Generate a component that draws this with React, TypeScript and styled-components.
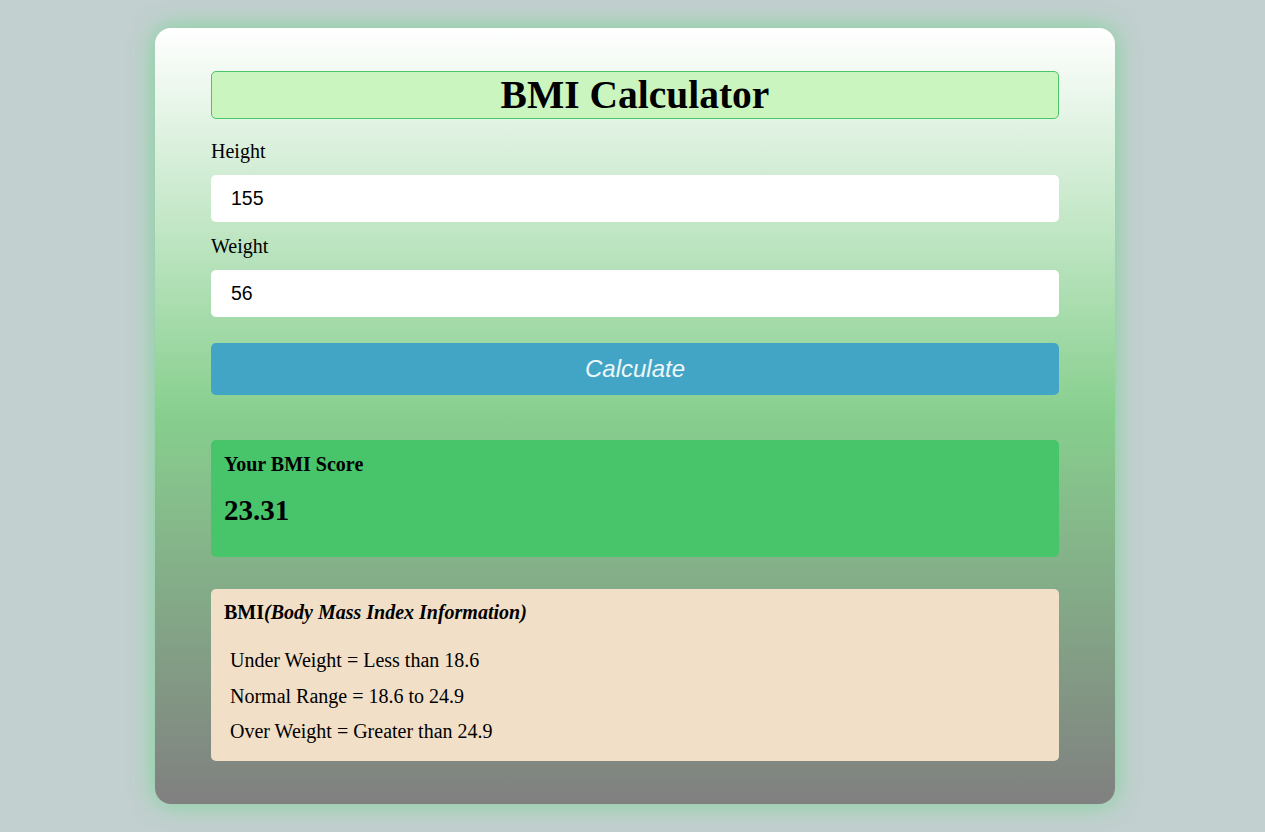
import React from "react";
import styled, { createGlobalStyle } from "styled-components";

const Global = createGlobalStyle`
  html, body { margin: 0; padding: 0; }
  body {
    background: #c2d0cf;
    font-family: "Liberation Serif", "Times New Roman", serif;
    color: #000;
  }
`;

const Page = styled.div`
  display: flex;
  justify-content: center;
  padding: 28px 0 28px 5px;
`;

const Card = styled.div`
  width: 960px;
  box-sizing: border-box;
  padding: 43px 56px 43px 56px;
  border-radius: 16px;
  background: linear-gradient(to bottom, #ffffff 0%, #87cf8e 50%, #808080 100%);
  box-shadow: 0 0 24px rgba(110, 210, 140, 0.85);
  display: flex;
  flex-direction: column;
`;

const Title = styled.h1`
  margin: 0;
  height: 48px;
  box-sizing: border-box;
  border: 1px solid #4cc46a;
  border-radius: 5px;
  background: #cbf5be;
  font-size: 39.5px;
  line-height: 46px;
  font-weight: bold;
  text-align: center;
`;

const Label = styled.label<{ $top: number }>`
  display: block;
  margin-top: ${(p) => p.$top}px;
  font-size: 20px;
  line-height: 23px;
`;

const Input = styled.input`
  display: block;
  margin-top: 12px;
  height: 47px;
  box-sizing: border-box;
  border: none;
  border-radius: 5px;
  background: #fff;
  padding: 0 20px;
  font-family: "Liberation Sans", Arial, sans-serif;
  font-size: 19.5px;
  color: #000;
  outline: none;
`;

const Button = styled.button`
  margin-top: 26px;
  height: 52px;
  border: none;
  border-radius: 5px;
  background: #42a5c5;
  color: #eef7fa;
  font-family: "Liberation Sans", Arial, sans-serif;
  font-style: italic;
  font-size: 24px;
  cursor: pointer;
`;

const ScoreBox = styled.div`
  margin-top: 45px;
  height: 117px;
  box-sizing: border-box;
  background: #48c46a;
  border-radius: 5px;
  padding: 13px 13px;
`;

const ScoreTitle = styled.h3`
  margin: 0;
  font-size: 20px;
  line-height: 23px;
  font-weight: bold;
`;

const ScoreValue = styled.div`
  margin-top: 18px;
  font-size: 29px;
  line-height: 33px;
  font-weight: bold;
`;

const InfoBox = styled.div`
  margin-top: 32px;
  height: 172px;
  box-sizing: border-box;
  background: #f2dfc7;
  border-radius: 5px;
  padding: 12px 13px;
`;

const InfoTitle = styled.h3`
  margin: 0 0 19px;
  font-size: 20px;
  line-height: 23px;
  font-weight: bold;
  em { font-style: italic; }
`;

const InfoLine = styled.p`
  margin: 0;
  padding-left: 6px;
  font-size: 20px;
  line-height: 35.5px;
`;

export default function App() {
  return (
    <>
      <Global />
      <Page>
        <Card>
          <Title>BMI Calculator</Title>
          <Label $top={21}>Height</Label>
          <Input defaultValue="155" />
          <Label $top={13}>Weight</Label>
          <Input defaultValue="56" />
          <Button>Calculate</Button>
          <ScoreBox>
            <ScoreTitle>Your BMI Score</ScoreTitle>
            <ScoreValue>23.31</ScoreValue>
          </ScoreBox>
          <InfoBox>
            <InfoTitle>
              BMI<em>(Body Mass Index Information)</em>
            </InfoTitle>
            <InfoLine>Under Weight = Less than 18.6</InfoLine>
            <InfoLine>Normal Range = 18.6 to 24.9</InfoLine>
            <InfoLine>Over Weight = Greater than 24.9</InfoLine>
          </InfoBox>
        </Card>
      </Page>
    </>
  );
}
